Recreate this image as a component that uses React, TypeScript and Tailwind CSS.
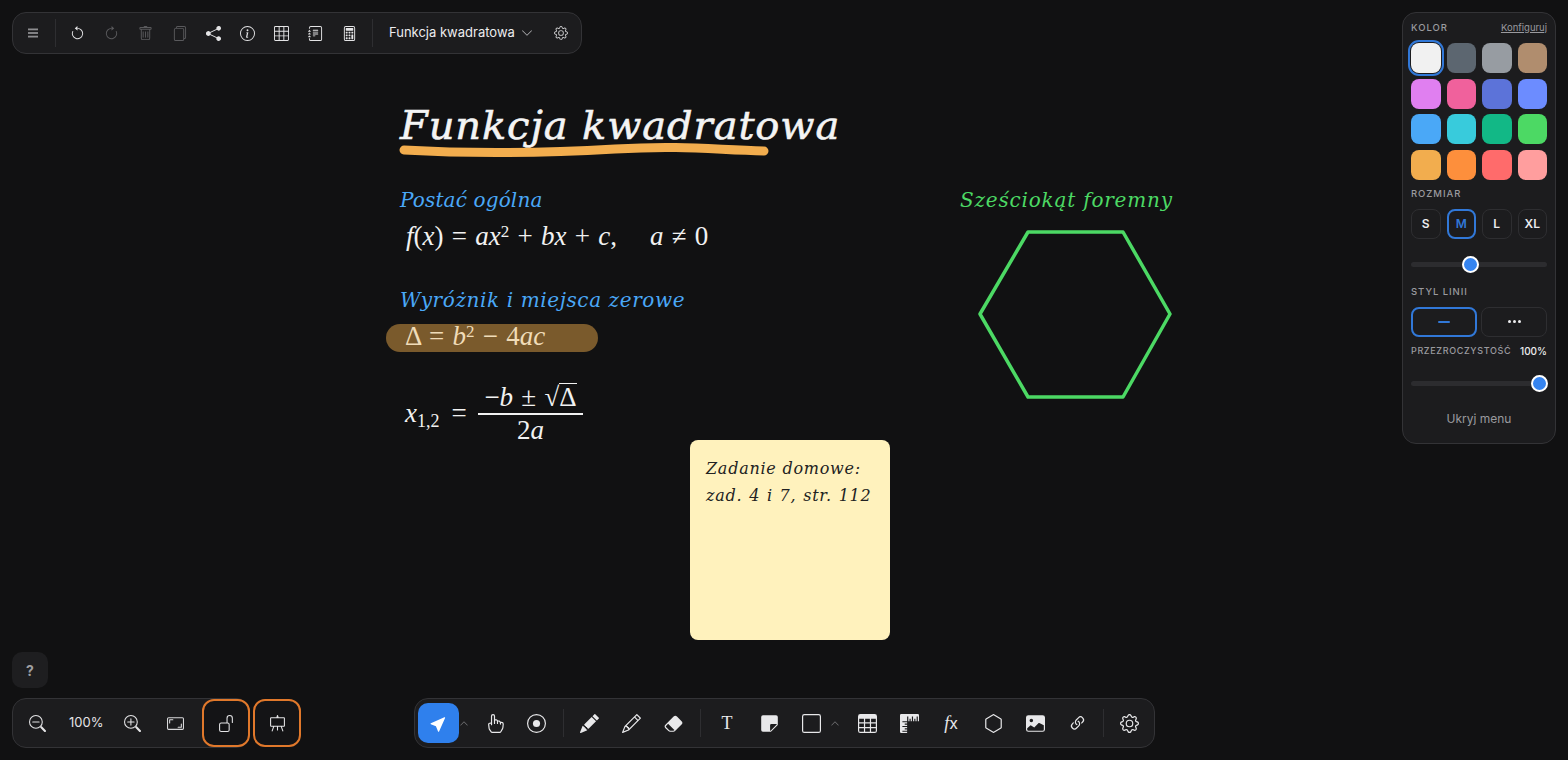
import type { ReactNode } from "react";
import {
  BsArrowClockwise,
  BsArrowCounterclockwise,
  BsAspectRatio,
  BsCalculator,
  BsChevronDown,
  BsChevronUp,
  BsCursorFill,
  BsEasel,
  BsEraserFill,
  BsFiles,
  BsGear,
  BsGrid3X3,
  BsHandIndex,
  BsHexagon,
  BsImageFill,
  BsInfoCircle,
  BsJournalText,
  BsLink45Deg,
  BsPencil,
  BsPencilFill,
  BsRecordCircle,
  BsRulers,
  BsShareFill,
  BsSquare,
  BsStickyFill,
  BsTable,
  BsTrash,
  BsUnlock,
  BsZoomIn,
  BsZoomOut,
} from "react-icons/bs";

const SWATCHES = [
  "bg-[#f1f1f1]",
  "bg-[#5c6670]",
  "bg-[#979ca2]",
  "bg-[#b08d6e]",
  "bg-[#e07ff0]",
  "bg-[#f0619c]",
  "bg-[#5c73d9]",
  "bg-[#6c8cff]",
  "bg-[#4aa8f7]",
  "bg-[#38cbdc]",
  "bg-[#12b886]",
  "bg-[#4cd964]",
  "bg-[#f2ad4e]",
  "bg-[#fd8f3c]",
  "bg-[#ff6b6b]",
  "bg-[#ff9e9e]",
];

function Divider() {
  return <div className="h-[28px] w-px bg-[#2e2e31]" />;
}

function TopIcon({ children, dim }: { children: ReactNode; dim?: boolean }) {
  return (
    <div className={`flex h-[34px] w-[34px] items-center justify-center text-[15px] ${dim ? "text-[#5a5a5d]" : "text-[#e4e4e6]"}`}>
      {children}
    </div>
  );
}

function ToolIcon({ children }: { children: ReactNode }) {
  return <div className="flex h-[40px] w-[42px] items-center justify-center text-[19px] text-[#e8e8ea]">{children}</div>;
}

function SectionLabel({ children }: { children: ReactNode }) {
  return <span className="block text-[9.5px] font-medium leading-[12px] tracking-[0.1em] text-[#9a9a9e]">{children}</span>;
}

function Slider({ thumb, className }: { thumb: string; className: string }) {
  return (
    <div className={`relative h-[5px] rounded-full bg-[#2c2c2f] ${className}`}>
      <div className={`absolute top-[-6px] h-[17px] w-[17px] rounded-full border-[2px] border-white bg-[#3584f0] ${thumb}`} />
    </div>
  );
}

function SidePanel() {
  return (
    <aside className="absolute right-[12px] top-[12px] flex h-[432px] w-[154px] flex-col rounded-[14px] border border-[#333336] bg-[#1c1c1e] px-[8px] pt-[9px]">
      <div className="flex items-center justify-between">
        <SectionLabel>KOLOR</SectionLabel>
        <span className="text-[9.5px] leading-[12px] text-[#9a9a9e] underline">Konfiguruj</span>
      </div>
      <div className="mt-[9px] grid grid-cols-4 gap-x-[6px] gap-y-[5.5px]">
        {SWATCHES.map((swatch, index) => (
          <div
            key={swatch}
            className={`h-[30px] rounded-[8px] ${swatch} ${index === 0 ? "outline-2 outline-offset-[1px] outline-[#3178d8] ring-1 ring-[#1c1c1e]" : ""}`}
          />
        ))}
      </div>
      <div className="mt-[8px]">
        <SectionLabel>ROZMIAR</SectionLabel>
      </div>
      <div className="mt-[9px] grid grid-cols-4 gap-[6px]">
        {["S", "M", "L", "XL"].map((size) => (
          <div
            key={size}
            className={`flex h-[30px] items-center justify-center rounded-[8px] border text-[12px] font-semibold ${
              size === "M" ? "border-[2px] border-[#3178d8] text-[#3178d8]" : "border-[#2e2e31] text-[#ececee]"
            }`}
          >
            {size}
          </div>
        ))}
      </div>
      <Slider className="mt-[23px]" thumb="left-[51px]" />
      <div className="mt-[19px]">
        <SectionLabel>STYL LINII</SectionLabel>
      </div>
      <div className="mt-[9px] grid grid-cols-2 gap-[4px]">
        <div className="flex h-[30px] items-center justify-center rounded-[8px] border-[2px] border-[#3178d8]">
          <div className="h-[2px] w-[12px] rounded bg-[#3178d8]" />
        </div>
        <div className="flex h-[30px] items-center justify-center gap-[2px] rounded-[8px] border border-[#2e2e31]">
          <div className="h-[3px] w-[3px] rounded-full bg-[#ececee]" />
          <div className="h-[3px] w-[3px] rounded-full bg-[#ececee]" />
          <div className="h-[3px] w-[3px] rounded-full bg-[#ececee]" />
        </div>
      </div>
      <div className="mt-[8px] flex items-center justify-between">
        <span className="text-[9px] font-medium leading-[12px] tracking-[0.07em] text-[#9a9a9e]">PRZEZROCZYSTOŚĆ</span>
        <span className="text-[10px] font-medium leading-[12px] text-[#ececee]">100%</span>
      </div>
      <Slider className="mt-[24px]" thumb="right-[-1px]" />
      <div className="mt-[24px] text-center text-[12px] leading-[18px] text-[#9a9a9e]">Ukryj menu</div>
    </aside>
  );
}

function TopBar() {
  return (
    <header className="absolute left-[12px] top-[12px] flex h-[42px] w-[570px] items-center rounded-[14px] border border-[#333336] bg-[#1c1c1e] pl-[3px]">
      <TopIcon>
        <svg width="12" height="12" viewBox="0 0 12 12" fill="#8d8d90">
          <rect x="1" y="1.5" width="10" height="1.8" />
          <rect x="1" y="5.1" width="10" height="1.8" />
          <rect x="1" y="8.7" width="10" height="1.8" />
        </svg>
      </TopIcon>
      <div className="ml-[5px] mr-[4px]">
        <Divider />
      </div>
      <TopIcon>
        <BsArrowCounterclockwise />
      </TopIcon>
      <TopIcon dim>
        <BsArrowClockwise />
      </TopIcon>
      <TopIcon dim>
        <BsTrash />
      </TopIcon>
      <TopIcon dim>
        <BsFiles />
      </TopIcon>
      <TopIcon>
        <BsShareFill />
      </TopIcon>
      <TopIcon>
        <BsInfoCircle />
      </TopIcon>
      <TopIcon>
        <BsGrid3X3 />
      </TopIcon>
      <TopIcon>
        <BsJournalText />
      </TopIcon>
      <TopIcon>
        <BsCalculator />
      </TopIcon>
      <div className="ml-[6px] mr-[16px]">
        <Divider />
      </div>
      <span className="text-[13px] text-[#ececee]">Funkcja kwadratowa</span>
      <BsChevronDown className="ml-[6px] text-[12px] text-[#b5b5b8]" />
      <div className="ml-[21px] text-[14px] text-[#c8c8ca]">
        <BsGear />
      </div>
    </header>
  );
}

function ZoomBar() {
  return (
    <div className="absolute bottom-[12px] left-[12px] flex items-center gap-[3px]">
      <div className="flex h-[50px] w-[238px] items-center rounded-[14px] border border-[#333336] bg-[#1c1c1e] pl-[16px]">
        <BsZoomOut className="text-[17px] text-[#e4e4e6]" />
        <span className="ml-[23px] w-[34px] text-[13px] text-[#e4e4e6]">100%</span>
        <BsZoomIn className="ml-[21px] text-[17px] text-[#e4e4e6]" />
        <BsAspectRatio className="ml-[26px] text-[17px] text-[#d8d8da]" />
      </div>
      <div className="ml-[-51px] flex h-[48px] w-[48px] items-center justify-center rounded-[12px] border-[2px] border-[#e0782b] bg-[#141416] text-[17px] text-[#e4e4e6]">
        <BsUnlock />
      </div>
      <div className="flex h-[48px] w-[48px] items-center justify-center rounded-[12px] border-[2px] border-[#e0782b] bg-[#141416] text-[17px] text-[#e4e4e6]">
        <BsEasel />
      </div>
    </div>
  );
}

function ToolBar() {
  return (
    <div className="absolute bottom-[12px] left-[414px] flex h-[50px] w-[741px] items-center rounded-[14px] border border-[#333336] bg-[#1c1c1e] pl-[3px]">
      <div className="flex h-[40px] w-[41px] items-center justify-center rounded-[10px] bg-[#2f80ed] text-[17px] text-white">
        <BsCursorFill />
      </div>
      <BsChevronUp className="ml-[-1px] w-[12px] text-[9px] text-[#77777a]" />
      <div className="ml-[3px]" />
      <ToolIcon>
        <BsHandIndex />
      </ToolIcon>
      <ToolIcon>
        <BsRecordCircle />
      </ToolIcon>
      <div className="ml-[6px] mr-[4px]">
        <Divider />
      </div>
      <ToolIcon>
        <BsPencilFill />
      </ToolIcon>
      <ToolIcon>
        <BsPencil />
      </ToolIcon>
      <ToolIcon>
        <BsEraserFill />
      </ToolIcon>
      <div className="ml-[6px] mr-[5px]">
        <Divider />
      </div>
      <ToolIcon>
        <span className="font-['Liberation_Serif'] text-[18px]">T</span>
      </ToolIcon>
      <ToolIcon>
        <BsStickyFill />
      </ToolIcon>
      <ToolIcon>
        <BsSquare />
      </ToolIcon>
      <BsChevronUp className="ml-[-3px] w-[12px] text-[9px] text-[#77777a]" />
      <div className="ml-[5px]" />
      <ToolIcon>
        <BsTable />
      </ToolIcon>
      <ToolIcon>
        <BsRulers />
      </ToolIcon>
      <ToolIcon>
        <span className="text-[16px]">
          <i className="font-['Liberation_Serif'] text-[18px]">f</i>x
        </span>
      </ToolIcon>
      <ToolIcon>
        <BsHexagon />
      </ToolIcon>
      <ToolIcon>
        <BsImageFill />
      </ToolIcon>
      <ToolIcon>
        <BsLink45Deg />
      </ToolIcon>
      <div className="ml-[5px] mr-[4px]">
        <Divider />
      </div>
      <ToolIcon>
        <BsGear />
      </ToolIcon>
    </div>
  );
}

function Canvas() {
  const hand = "absolute whitespace-nowrap font-['DejaVu_Serif'] italic leading-none";
  const math = "absolute whitespace-nowrap font-['Liberation_Serif'] text-[27px] leading-none text-[#f1f1f1] [word-spacing:1.5px]";
  return (
    <>
      <div className={`${hand} left-[400px] top-[105px] text-[40px] tracking-[0.9px] text-[#f4f4f4] [-webkit-text-stroke:0.6px_#f4f4f4]`}>
        Funkcja kwadratowa
      </div>
      <svg className="absolute left-[395px] top-[140px]" width="380" height="22" viewBox="0 0 380 22" fill="none">
        <path d="M9 10 C 80 14, 150 13, 220 9 S 320 10, 369 11" stroke="#f2ad4e" strokeWidth="9" strokeLinecap="round" />
      </svg>

      <div className={`${hand} left-[400px] top-[190px] text-[20px] tracking-[0.15px] text-[#4aa8f7]`}>Postać ogólna</div>
      <div className={`${math} left-[406px] top-[223px]`}>
        <i>f</i>(<i>x</i>) = <i>ax</i>
        <sup className="text-[17px]">2</sup> + <i>bx</i> + <i>c</i>,
        <span className="ml-[33px]">
          <i>a</i> ≠ 0
        </span>
      </div>

      <div className={`${hand} left-[400px] top-[290px] text-[20px] tracking-[0.6px] text-[#4aa8f7]`}>Wyróżnik i miejsca zerowe</div>
      <div className="absolute left-[386px] top-[324px] h-[28px] w-[212px] rounded-full bg-[#7a5a2c]" />
      <div className={`${math} left-[405px] top-[323px] !text-[#f0dcb8]`}>
        Δ = <i>b</i>
        <sup className="text-[17px]">2</sup> − 4<i>ac</i>
      </div>

      <div className={`${math} left-[405px] top-[400px]`}>
        <i>x</i>
        <sub className="text-[18px]">1,2</sub>
        <span className="ml-[12px]">=</span>
      </div>
      <div className={`${math} left-[478px] top-[383px] flex w-[105px] flex-col items-center`}>
        <div className="flex items-end pb-[2px]">
          −<i>b</i>&nbsp;±&nbsp;√<span className="border-t border-[#f1f1f1]">Δ</span>
        </div>
        <div className="h-[2px] w-full bg-[#f1f1f1]" />
        <div className="pt-[2px]">
          2<i>a</i>
        </div>
      </div>

      <div className="absolute left-[690px] top-[440px] h-[200px] w-[200px] rounded-[8px] bg-[#fff2bd] px-[16px] pt-[15px] font-['DejaVu_Serif'] text-[16px] italic leading-[27px] tracking-[0.75px] text-[#222]">
        <div className="whitespace-nowrap">Zadanie domowe:</div>
        <div className="whitespace-nowrap [word-spacing:1px]">zad. 4 i 7, str. 112</div>
      </div>

      <div className={`${hand} left-[960px] top-[190px] text-[20px] tracking-[0.8px] text-[#4cd964]`}>Sześciokąt foremny</div>
      <svg className="absolute left-[975px] top-[226px]" width="200" height="176" viewBox="0 0 200 176" fill="none">
        <path d="M53 6 H148 L195 88 L148 171 H53 L5 88 Z" stroke="#4cd964" strokeWidth="3.5" strokeLinejoin="round" />
      </svg>
    </>
  );
}

export default function App() {
  return (
    <div className="relative h-[760px] w-[1568px] overflow-hidden bg-[#111112] font-['Inter',sans-serif]">
      <Canvas />
      <TopBar />
      <SidePanel />
      <div className="absolute bottom-[72px] left-[12px] flex h-[36px] w-[36px] items-center justify-center rounded-[10px] bg-[#1e1e20] text-[14px] font-bold text-[#a0a0a3]">
        ?
      </div>
      <ZoomBar />
      <ToolBar />
    </div>
  );
}
